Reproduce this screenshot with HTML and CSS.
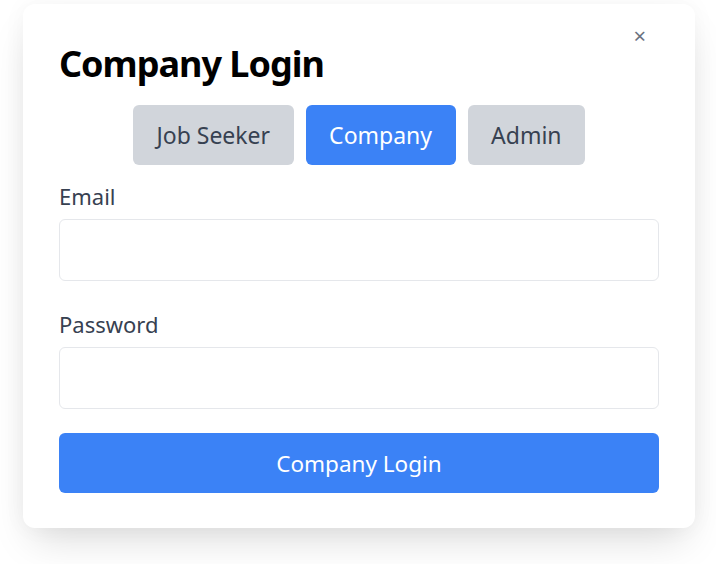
FILE: index.html
```html
<!DOCTYPE html>
<html>
<head>
<meta charset="utf-8">
<link rel="stylesheet" href="styles.css">
</head>
<body>
<div class="card">
  <button class="close" aria-label="Close">&times;</button>
  <h1 class="title">Company Login</h1>
  <div class="tabs">
    <button class="tab">Job Seeker</button>
    <button class="tab active">Company</button>
    <button class="tab">Admin</button>
  </div>
  <form class="form">
    <div class="field">
      <label class="label">Email</label>
      <input class="input" type="email">
    </div>
    <div class="field">
      <label class="label">Password</label>
      <input class="input" type="password">
    </div>
    <button type="button" class="submit">Company Login</button>
  </form>
</div>
</body>
</html>
```

FILE: styles.css
```css
* { box-sizing: border-box; }
html, body { margin: 0; padding: 0; background: #fff; }
body {
  font-family: "Noto Sans", "Open Sans", sans-serif;
  color: #374151;
  padding: 4px 21px 40px 23px;
}
.card {
  position: relative;
  width: 672px;
  background: #fff;
  border-radius: 12px;
  box-shadow: 0 20px 40px -10px rgba(0,0,0,0.15), 0 0 24px rgba(0,0,0,0.04);
  padding: 36px 36px 35px 36px;
}
.close {
  position: absolute;
  top: 20px;
  right: 49px;
  border: none;
  background: none;
  color: #6b7280;
  font-size: 22px;
  line-height: 22px;
  padding: 0;
  font-family: "Noto Sans", sans-serif;
}
.title {
  margin: 0 0 17px;
  font-size: 36px;
  line-height: 48px;
  font-weight: 700;
  letter-spacing: -1px;
  color: #000;
}
.tabs {
  display: flex;
  justify-content: center;
  gap: 12px;
  margin-bottom: 16px;
}
.tab {
  height: 60px;
  padding: 0 23.5px;
  border: none;
  border-radius: 6px;
  background: #d1d5db;
  color: #374151;
  font-family: inherit;
  font-size: 23px;
}
.tab.active { background: #3b82f6; color: #fff; }
.form { display: flex; flex-direction: column; }
.field { display: flex; flex-direction: column; gap: 8px; margin-bottom: 28px; }
.field + .field { margin-bottom: 24px; }
.label { font-size: 22px; line-height: 30px; color: #374151; }
.input {
  height: 62px;
  border: 1px solid #e5e7eb;
  border-radius: 6px;
  font-size: 20px;
  padding: 0 12px;
}
.submit {
  height: 60px;
  border: none;
  border-radius: 6px;
  background: #3b82f6;
  color: #fff;
  font-family: inherit;
  font-size: 22.5px;
}
```
